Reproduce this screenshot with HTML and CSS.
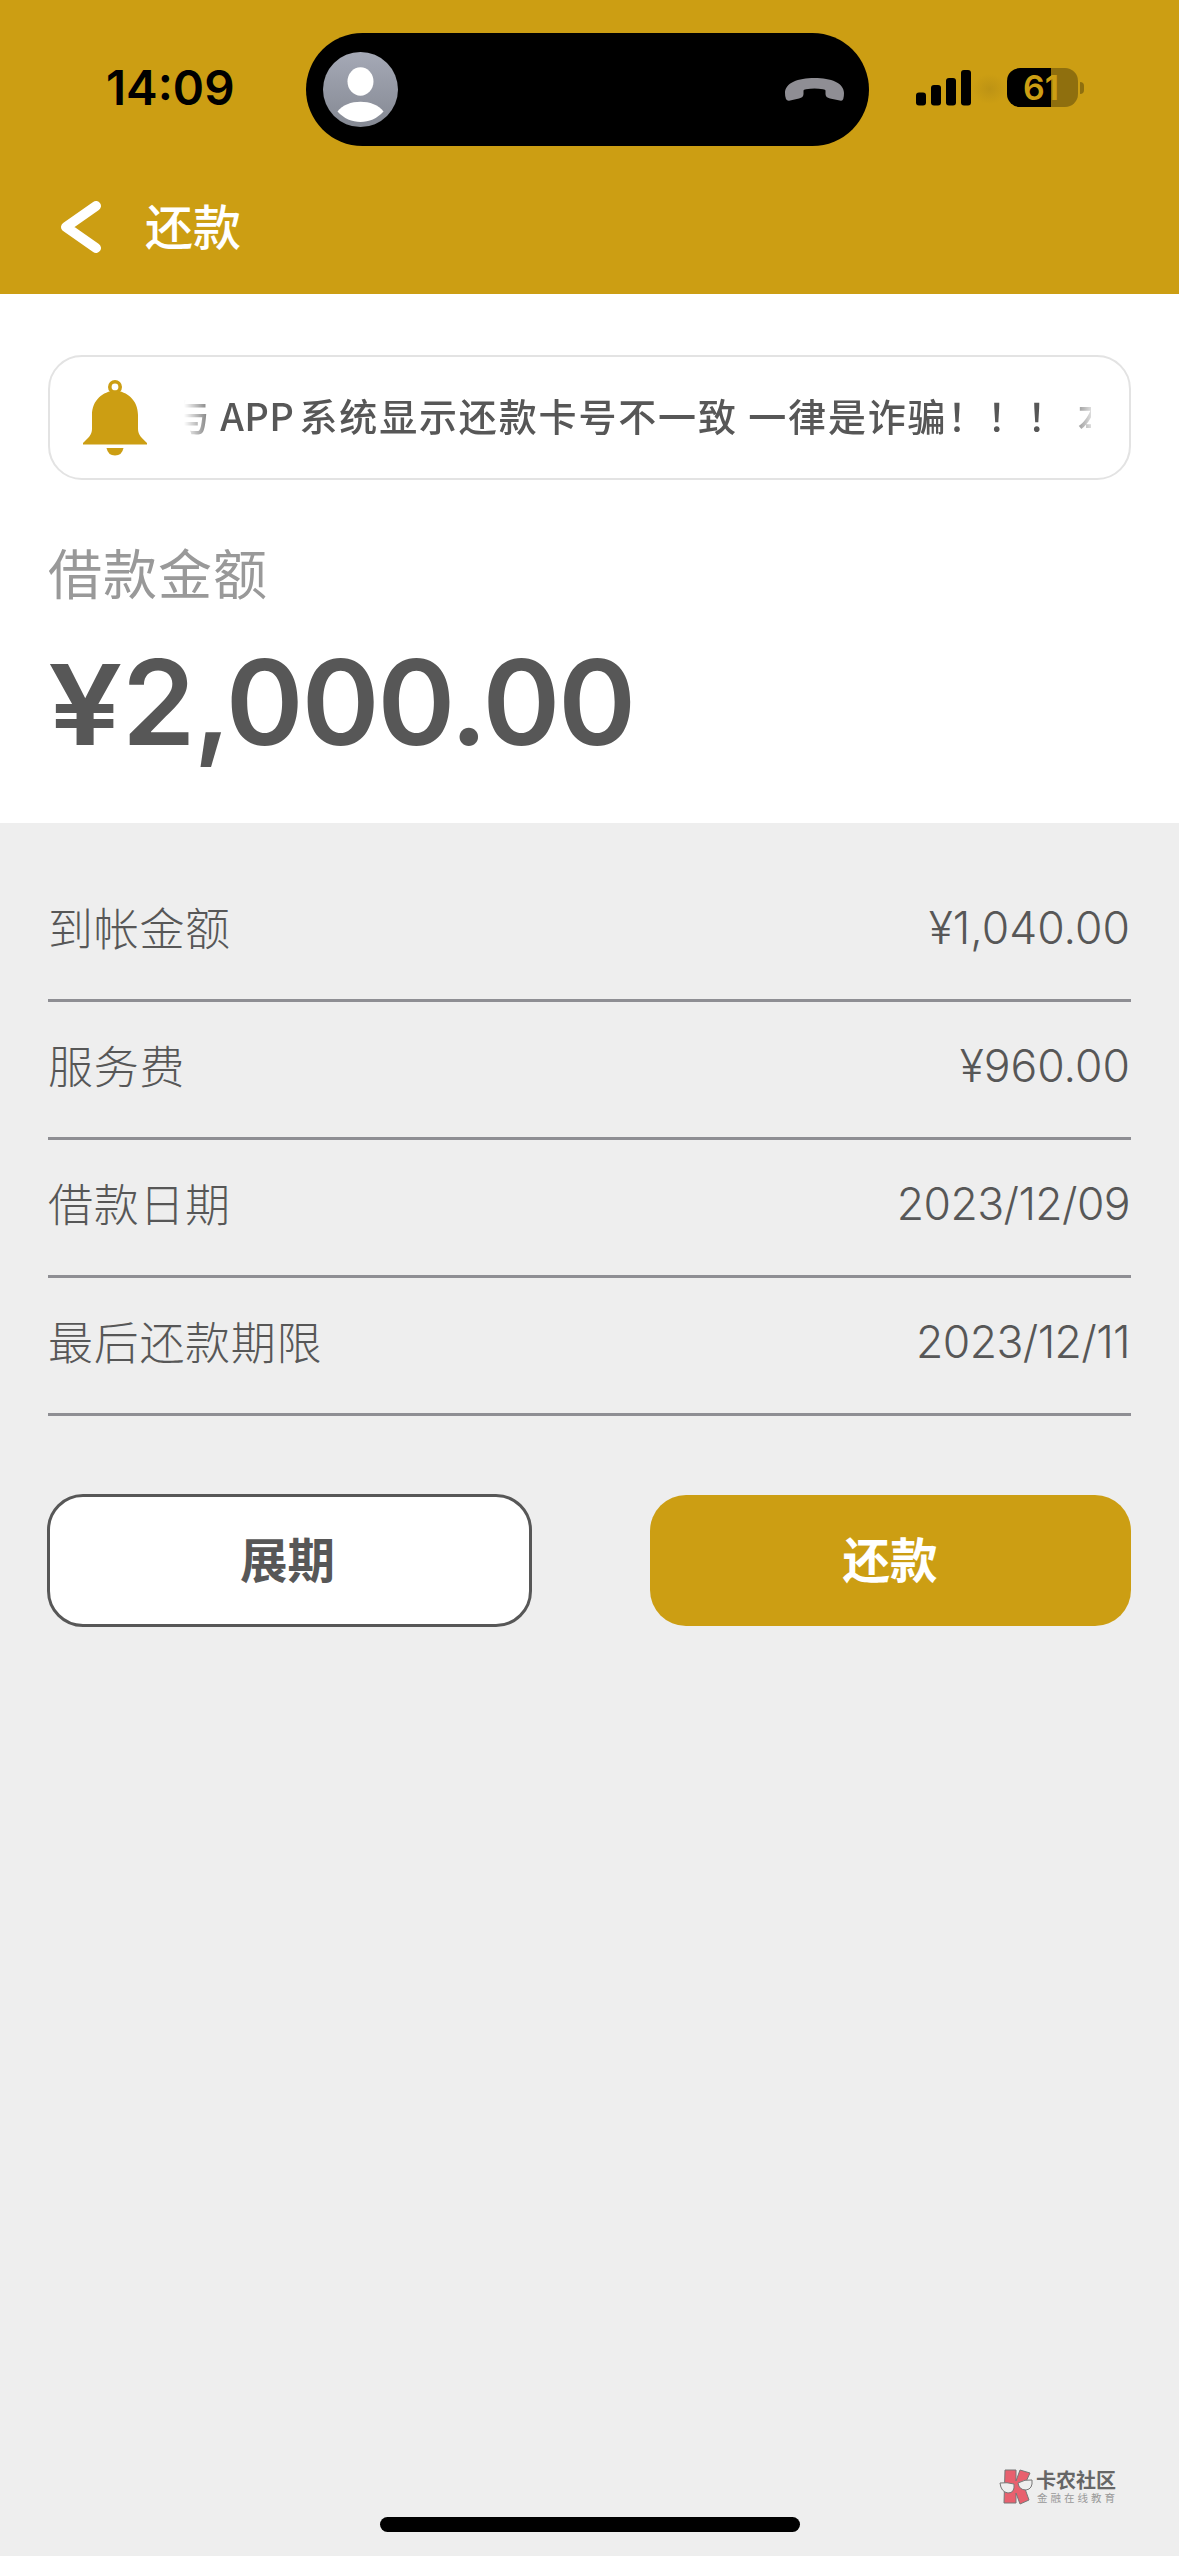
FILE: index.html
```html
<!DOCTYPE html>
<html lang="zh-CN">
<head>
<meta charset="utf-8">
<title>还款</title>
<link rel="stylesheet" href="styles.css">
</head>
<body>
<header class="header">
  <div class="status">
    <span class="time">14:09</span>
    <div class="island">
      <svg class="avatar" viewBox="0 0 75 75">
        <defs><linearGradient id="av" x1="0" y1="0" x2="0" y2="1"><stop offset="0" stop-color="#a5a9b6"/><stop offset="1" stop-color="#858993"/></linearGradient></defs>
        <circle cx="37.5" cy="37.500" r="37.500" fill="url(#av)"/>
        <ellipse cx="37.500" cy="29.500" rx="13" ry="14.200" fill="#fff"/>
        <path d="M14.500 59.500C24 46.500 51 46.500 60.500 59.500C48 73.500 27 73.500 14.500 59.500Z" fill="#fff"/>
      </svg>
      <svg class="phone" viewBox="0 0 59 23">
        <path d="M0 15C0 5 13 0 29.500 0S59 5 59 15Q59 23 56 22.700L45 20.500Q40.500 19.500 40.500 16V12.500Q40.500 11.500 38 11.200Q29.500 10 21 11.200Q18.500 11.500 18.500 12.500V16Q18.500 19.500 14 20.500L4 22.700Q0 23 0 15Z" fill="#8f8e94"/>
      </svg>
    </div>
    <svg class="signal" viewBox="0 0 56 36">
      <rect x="0" y="22.500" width="10" height="13" rx="3"/><rect x="15" y="15" width="10" height="20.500" rx="3"/><rect x="30" y="8" width="10" height="27.500" rx="3"/><rect x="45" y="0" width="10" height="35.500" rx="3"/>
    </svg>
    <span class="smudge"></span>
    <div class="battery"><span class="level">61</span></div>
    <span class="nub"></span>
  </div>
  <div class="nav">
    <svg class="back" viewBox="0 0 42 54"><path d="M36 6L6 27L36 48" fill="none" stroke="#fff" stroke-width="10" stroke-linecap="round" stroke-linejoin="round"/></svg>
    <h1 class="title">还款</h1>
  </div>
</header>
<section class="summary">
  <div class="notice">
    <svg class="bell" viewBox="0 0 66 76">
      <circle cx="33" cy="7" r="5.200" fill="none" stroke="#cc9e13" stroke-width="3.600"/>
      <path d="M33 10.500C45 11.500 56 20 56 35V49C56 55 60 58 65 63V64.500H1V63C6 58 10 55 10 49V35C10 20 21 11.500 33 10.500Z" fill="#cc9e13"/>
      <path d="M24.500 68H41.500Q40 75.500 33 75.500T24.500 68Z" fill="#cc9e13"/>
    </svg>
    <div class="marquee"><span class="ticker">与 <span class="app">APP</span> 系统显示还款卡号不一致 一律是诈骗！！！ 本</span></div>
  </div>
  <div class="caption">借款金额</div>
  <div class="amount"><span class="yen">¥</span><span>2,000.00</span></div>
</section>
<main class="details">
  <dl class="rows">
    <div class="row"><dt>到帐金额</dt><dd>¥1,040.00</dd></div>
    <div class="row"><dt>服务费</dt><dd>¥960.00</dd></div>
    <div class="row"><dt>借款日期</dt><dd class="date">2023/12/09</dd></div>
    <div class="row"><dt>最后还款期限</dt><dd class="date">2023/12/11</dd></div>
  </dl>
  <div class="actions">
    <button class="btn outline">展期</button>
    <button class="btn solid">还款</button>
  </div>
</main>
<div class="watermark">
  <svg class="logo" viewBox="0 0 34 36">
    <path d="M6 1H17V12L21 1L31 4L25 17L30 31L21 35L17 24V34H5Z" fill="#e8606e" stroke="#777" stroke-width="1"/>
    <path d="M1 14Q8 13 15 15Q16 24 9 24Q2 23 1 14ZM19 14Q26 10 33 11Q34 20 27 21Q20 21 19 14Z" fill="#eee" stroke="#777" stroke-width="1"/>
  </svg>
  <div class="brand"><b>卡农社区</b><small>金融在线教育</small></div>
</div>
<div class="home"></div>
</body>
</html>
```

FILE: styles.css
```css
* { box-sizing: border-box; }
body {
  margin: 0;
  width: 1179px;
  height: 2556px;
  overflow: hidden;
  display: flex;
  flex-direction: column;
  background: #eee;
  color: #575757;
  font-family: Inter, "Noto Sans CJK SC", sans-serif;
}
svg { display: block; flex: none; }

.header { height: 294px; background: #cc9e13; flex: none; }
.status { display: flex; align-items: center; height: 178px; padding-left: 106px; }
.time { width: 200px; margin-bottom: 2px; font-size: 47.5px; font-weight: 600; color: #000; line-height: 60px; }
.island {
  display: flex; align-items: center; justify-content: space-between;
  width: 563px; height: 113px; padding: 0 25px 0 17px;
  border-radius: 57px; background: #000;
}
.avatar { width: 75px; height: 75px; }
.phone { width: 59px; height: 23px; }
.signal { width: 56px; height: 36px; margin: 0 0 3px 47px; }
.smudge { width: 35px; height: 30px; background: radial-gradient(closest-side, #bd9314, #cc9e13); }
.battery {
  width: 71px; height: 39px; margin-bottom: 3px; border-radius: 13px;
  background: linear-gradient(90deg, #000 44px, #8f6f0e 44px);
  color: #cc9e13; font-size: 34px; font-weight: 600; line-height: 39px; text-align: center;
}
.level { margin-right: 3px; }
.nub { width: 4px; height: 12px; margin: 0 0 3px 2px; border-radius: 0 5px 5px 0; background: #8f6f0e; }
.nav { display: flex; align-items: center; height: 98px; padding-left: 60px; }
.back { width: 42px; height: 54px; }
.title { margin: 2px 0 0 43px; font-size: 48px; font-weight: 500; line-height: 60px; color: #fff; }

.summary { flex: none; height: 529px; padding: 61px 48px 0; background: #fff; }
.notice {
  display: flex; align-items: center; height: 125px; padding: 0 38px 0 32px;
  border: 2px solid #e3e3e3; border-radius: 34px;
}
.bell { width: 66px; height: 76px; }
.marquee {
  width: 910px; margin-left: 36px; overflow: hidden;
  -webkit-mask-image: linear-gradient(90deg, transparent, #000 32px, #000 880px, transparent 914px);
  mask-image: linear-gradient(90deg, transparent, #000 32px, #000 880px, transparent 914px);
}
.ticker {
  display: block; margin: -6px 0 0 -12px; white-space: nowrap;
  font-family: "Noto Sans CJK SC", sans-serif;
  font-size: 38px; font-weight: 500; letter-spacing: 1.85px; line-height: 60px;
}
.app { margin: 0 -5px 0 -2px; letter-spacing: 0.3px; }
.caption { margin-top: 56px; font-size: 54px; letter-spacing: 1px; line-height: 80px; font-weight: 400; color: #999; }
.amount { margin-top: 16px; font-size: 118px; font-weight: 600; line-height: 140px; letter-spacing: -2px; display: flex; align-items: baseline; }
.yen { width: 74px; font-size: 112px; letter-spacing: 0; transform: scaleX(1.18); transform-origin: 0 0; }

.details { padding: 41px 48px 0 47px; }
.rows { margin: 0 0 0 1px; }
.row { display: flex; justify-content: space-between; align-items: center; height: 138px; padding: 0 1px 11px 0; border-bottom: 3px solid #8e8e93; font-weight: 300; }
.row dt { font-size: 45px; letter-spacing: 0.7px; }
.row dd { margin: 3px 0 0; font-size: 44.5px; }
.row .date { letter-spacing: -0.6px; }
.actions { display: flex; justify-content: space-between; align-items: center; margin-top: 78px; }
.btn {
  height: 133px; width: 485px; padding: 0 0 6px; border-radius: 36px;
  font-family: inherit; font-size: 47.5px; font-weight: 700; text-align: center;
}
.outline { padding-right: 4px; border: 3px solid #575757; background: #fff; color: #575757; }
.solid { width: 481px; height: 131px; padding-right: 1px; border: 0; background: #cc9e13; color: #fff; }

.watermark { display: flex; width: 180px; height: 40px; margin: auto 0 8px 999px; }
.logo { width: 34px; height: 36px; }
.brand { display: flex; flex-direction: column; margin-left: 3px; font-family: "Noto Sans CJK SC", sans-serif; white-space: nowrap; }
.brand b { font-size: 20px; line-height: 22px; font-weight: 700; color: #666; }
.brand small { margin-left: 1px; font-size: 10.5px; line-height: 14px; letter-spacing: 3px; color: #999; }
.home { flex: none; width: 420px; height: 15px; margin: 0 auto 24px; border-radius: 8px; background: #000; }
```
